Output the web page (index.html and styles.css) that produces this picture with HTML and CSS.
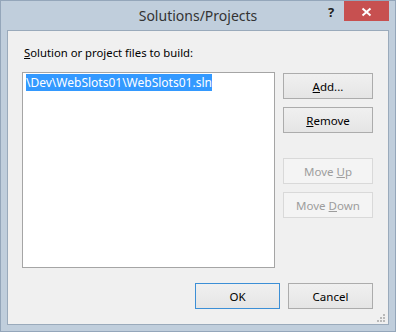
FILE: index.html
```html
<!DOCTYPE html>
<html lang="en">
<head>
    <meta charset="UTF-8">
    <title>Solutions/Projects</title>
    <link rel="stylesheet" href="styles.css">
</head>
<body>
    <div class="window">
        <div class="titlebar">
            <span class="spacer"></span>
            <span class="title">Solutions/Projects</span>
            <div class="controls">
                <span class="help">?</span>
                <span class="close">
                    <svg width="45" height="20" viewBox="0 0 45 20">
                        <path d="M18.5 7.5 L26.5 14.5 M26.5 7.5 L18.5 14.5" stroke="#fff" stroke-width="2" fill="none"/>
                    </svg>
                </span>
            </div>
        </div>
        <div class="client">
            <div class="label"><u>S</u>olution or project files to build:</div>
            <div class="main">
                <div class="listbox">
                    <span class="item selected">\Dev\WebSlots01\WebSlots01.sln</span>
                </div>
                <div class="side">
                    <button class="btn"><u>A</u>dd...</button>
                    <button class="btn"><u>R</u>emove</button>
                    <button class="btn gap" disabled>Move <u>U</u>p</button>
                    <button class="btn" disabled>Move <u>D</u>own</button>
                </div>
            </div>
            <div class="footer">
                <button class="btn small default">OK</button>
                <button class="btn small">Cancel</button>
            </div>
            <svg class="grip" width="10" height="9" viewBox="0 0 10 9">
                <rect x="6" y="0" width="2" height="2" fill="#b9b9b9"/>
                <rect x="3" y="3" width="2" height="2" fill="#b9b9b9"/>
                <rect x="6" y="3" width="2" height="2" fill="#b9b9b9"/>
                <rect x="0" y="6" width="2" height="2" fill="#b9b9b9"/>
                <rect x="3" y="6" width="2" height="2" fill="#b9b9b9"/>
                <rect x="6" y="6" width="2" height="2" fill="#b9b9b9"/>
            </svg>
        </div>
    </div>
</body>
</html>
```

FILE: styles.css
```css
body {
    margin: 0;
    font-family: 'Noto Sans', 'Open Sans', sans-serif;
    font-size: 12px;
    color: #000;
}
.window {
    width: 396px;
    height: 332px;
    box-sizing: border-box;
    border: 1px solid #94a6ba;
    background: #c0cedc;
    padding: 0 6px 6px 6px;
    display: flex;
    flex-direction: column;
}
.titlebar {
    height: 29px;
    display: grid;
    grid-template-columns: 1fr auto 1fr;
    margin: 0 -6px;
    padding: 0 6px;
}
.title {
    font-size: 14px;
    color: #333;
    line-height: 29px;
}
.controls {
    display: flex;
    justify-content: flex-end;
    align-items: flex-start;
}
.help {
    width: 24px;
    margin-right: 1px;
    text-align: center;
    font-weight: bold;
    font-size: 13px;
    line-height: 23px;
    color: #222;
}
.close {
    width: 45px;
    height: 20px;
    background: #c75050;
}
.close svg {
    display: block;
}
.client {
    flex: 1;
    border: 1px solid #9aaabb;
    background: #f0f0f0;
    padding: 14px 15px 15px 14px;
    position: relative;
}
.label {
    font-size: 11.3px;
    line-height: 16px;
    margin-left: 2px;
    margin-bottom: 11px;
}
.main {
    display: flex;
    gap: 8px;
}
.listbox {
    width: 253px;
    height: 196px;
    box-sizing: border-box;
    border: 1px solid #a5a5a5;
    background: #fff;
    padding: 3px;
    line-height: 14px;
}
.item.selected {
    background: #3399ff;
    color: #fff;
}
.side {
    display: flex;
    flex-direction: column;
    gap: 8px;
    padding-top: 1px;
}
.btn {
    width: 90px;
    height: 26px;
    box-sizing: border-box;
    border: 1px solid #acacac;
    background: linear-gradient(#f0f0f0, #e5e5e5);
    font-family: inherit;
    font-size: 11.5px;
    color: #000;
    padding: 0;
}
.btn.gap {
    margin-top: 17px;
}
.btn:disabled {
    border-color: #d9d9d9;
    background: #f4f4f4;
    color: #9d9d9d;
}
.footer {
    display: flex;
    justify-content: flex-end;
    gap: 8px;
    margin-top: 15px;
}
.btn.small {
    width: 85px;
}
.btn.default {
    border-color: #3c8fd6;
}
.grip {
    position: absolute;
    right: 1px;
    bottom: 1px;
}
```
